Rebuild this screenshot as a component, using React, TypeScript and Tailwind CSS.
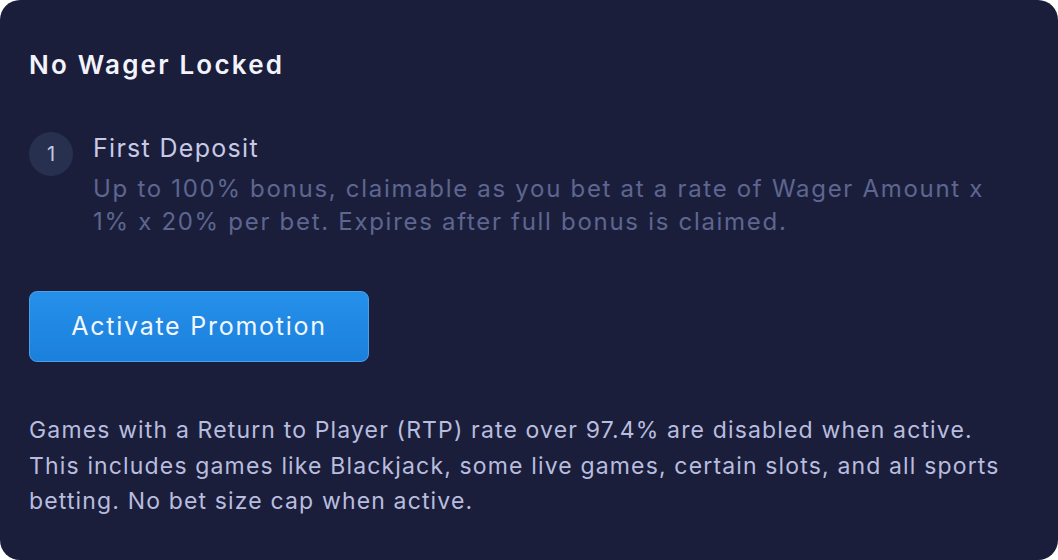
import React from 'react';

const font = { fontFamily: 'Inter, "Noto Sans", sans-serif' };

export default function App() {
  return (
    <div className="bg-white w-[1058px] h-[560px]" style={font}>
      <div className="w-full h-full bg-[#1b1e3b] rounded-[20px] pl-[29px] pt-[50px]">
        {/* Title */}
        <h2 className="text-[26px] leading-[30px] font-semibold tracking-[2.2px] text-[#f2f3fb]">No Wager Locked</h2>

        {/* Step */}
        <div className="flex mt-[52px]">
          <div className="w-[44px] h-[44px] shrink-0 rounded-full bg-[#283050] flex items-center justify-center text-[20px] text-[#c3c8e4]">
            1
          </div>
          <div className="ml-[20px]">
            <div className="text-[25px] leading-[32px] tracking-[1.3px] text-[#c6cae6]">First Deposit</div>
            <div className="text-[24px] leading-[33px] tracking-[1.7px] text-[#5d6690] mt-[8px]">
              <span className="block">Up to 100% bonus, claimable as you bet at a rate of Wager Amount x</span>
              <span className="block">1% x 20% per bet. Expires after full bonus is claimed.</span>
            </div>
          </div>
        </div>

        {/* Button */}
        <button className="mt-[53px] w-[340px] h-[71px] rounded-[8px] border border-[#4a9fee] bg-gradient-to-b from-[#2590ea] to-[#1b80dc] text-[25px] tracking-[1.75px] text-[#f2f7ff]">
          Activate Promotion
        </button>

        {/* Notes */}
        <div className="mt-[51px] text-[23px] leading-[35.5px] tracking-[1.15px] text-[#b8bddf]">
          <span className="block">Games with a Return to Player (RTP) rate over 97.4% are disabled when active.</span>
          <span className="block">This includes games like Blackjack, some live games, certain slots, and all sports</span>
          <span className="block">betting. No bet size cap when active.</span>
        </div>
      </div>
    </div>
  );
}
